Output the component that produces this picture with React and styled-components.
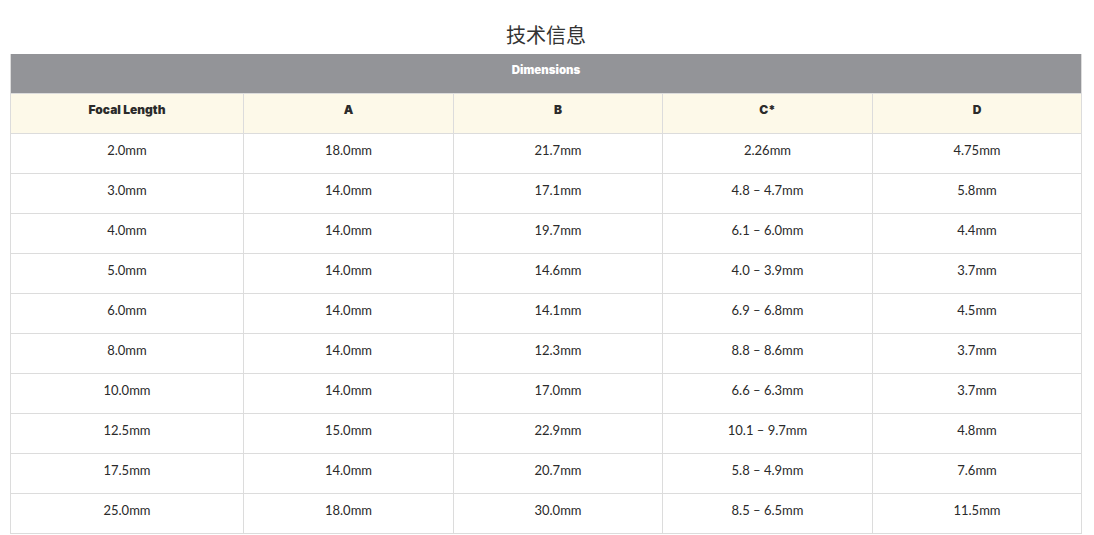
import React from "react";
import styled, { createGlobalStyle } from "styled-components";

const Global = createGlobalStyle`
  html, body { margin: 0; padding: 0; background: #fff; }
  body { font-family: "Lato", "Liberation Sans", sans-serif; color: #333; }
`;

const Page = styled.div`
  padding: 20px 12px 0 10px;
`;

const Title = styled.h2`
  margin: 0 0 4px;
  font-family: "Noto Sans CJK SC", "Noto Sans", sans-serif;
  font-weight: 400;
  font-size: 20px;
  line-height: 30px;
  text-align: center;
  color: #333;
`;

const Table = styled.table`
  width: 1072px;
  table-layout: fixed;
  border-collapse: separate;
  border-spacing: 0;
  border-left: 1px solid #dcdcdc;
`;

const Cell = styled.td`
  height: 40px;
  box-sizing: border-box;
  padding: 8px 6px 0;
  vertical-align: top;
  text-align: center;
  font-size: 13px;
  line-height: 16px;
  color: #2a2a2a;
  border-right: 1px solid #dcdcdc;
  border-bottom: 1px solid #dcdcdc;
`;

const HeadBase = styled.th`
  height: 40px;
  box-sizing: border-box;
  padding: 8px 6px 0;
  vertical-align: top;
  text-align: center;
  font-family: "Inter", "Lato", sans-serif;
  font-weight: 900;
  line-height: 16px;
  border-right: 1px solid #dcdcdc;
  border-bottom: 1px solid #dcdcdc;
`;

const GroupHead = styled(HeadBase)`
  background: #939498;
  color: #fff;
  font-size: 11.5px;
`;

const ColHead = styled(HeadBase)`
  background: #fdf9e9;
  color: #2b2b2b;
  font-size: 12px;
`;

const widths = [233, 210, 209, 210, 209];
const heads = ["Focal Length", "A", "B", "C*", "D"];
const rows = [
  ["2.0mm", "18.0mm", "21.7mm", "2.26mm", "4.75mm"],
  ["3.0mm", "14.0mm", "17.1mm", "4.8 – 4.7mm", "5.8mm"],
  ["4.0mm", "14.0mm", "19.7mm", "6.1 – 6.0mm", "4.4mm"],
  ["5.0mm", "14.0mm", "14.6mm", "4.0 – 3.9mm", "3.7mm"],
  ["6.0mm", "14.0mm", "14.1mm", "6.9 – 6.8mm", "4.5mm"],
  ["8.0mm", "14.0mm", "12.3mm", "8.8 – 8.6mm", "3.7mm"],
  ["10.0mm", "14.0mm", "17.0mm", "6.6 – 6.3mm", "3.7mm"],
  ["12.5mm", "15.0mm", "22.9mm", "10.1 – 9.7mm", "4.8mm"],
  ["17.5mm", "14.0mm", "20.7mm", "5.8 – 4.9mm", "7.6mm"],
  ["25.0mm", "18.0mm", "30.0mm", "8.5 – 6.5mm", "11.5mm"],
];

export default function App() {
  return (
    <Page>
      <Global />
      <Title>技术信息</Title>
      <Table>
        <colgroup>
          {widths.map((w, i) => (
            <col key={i} style={{ width: w }} />
          ))}
        </colgroup>
        <thead>
          <tr>
            <GroupHead colSpan={5}>Dimensions</GroupHead>
          </tr>
          <tr>
            {heads.map((h) => (
              <ColHead key={h}>{h}</ColHead>
            ))}
          </tr>
        </thead>
        <tbody>
          {rows.map((r, i) => (
            <tr key={i}>
              {r.map((c, j) => (
                <Cell key={j}>{c}</Cell>
              ))}
            </tr>
          ))}
        </tbody>
      </Table>
    </Page>
  );
}
